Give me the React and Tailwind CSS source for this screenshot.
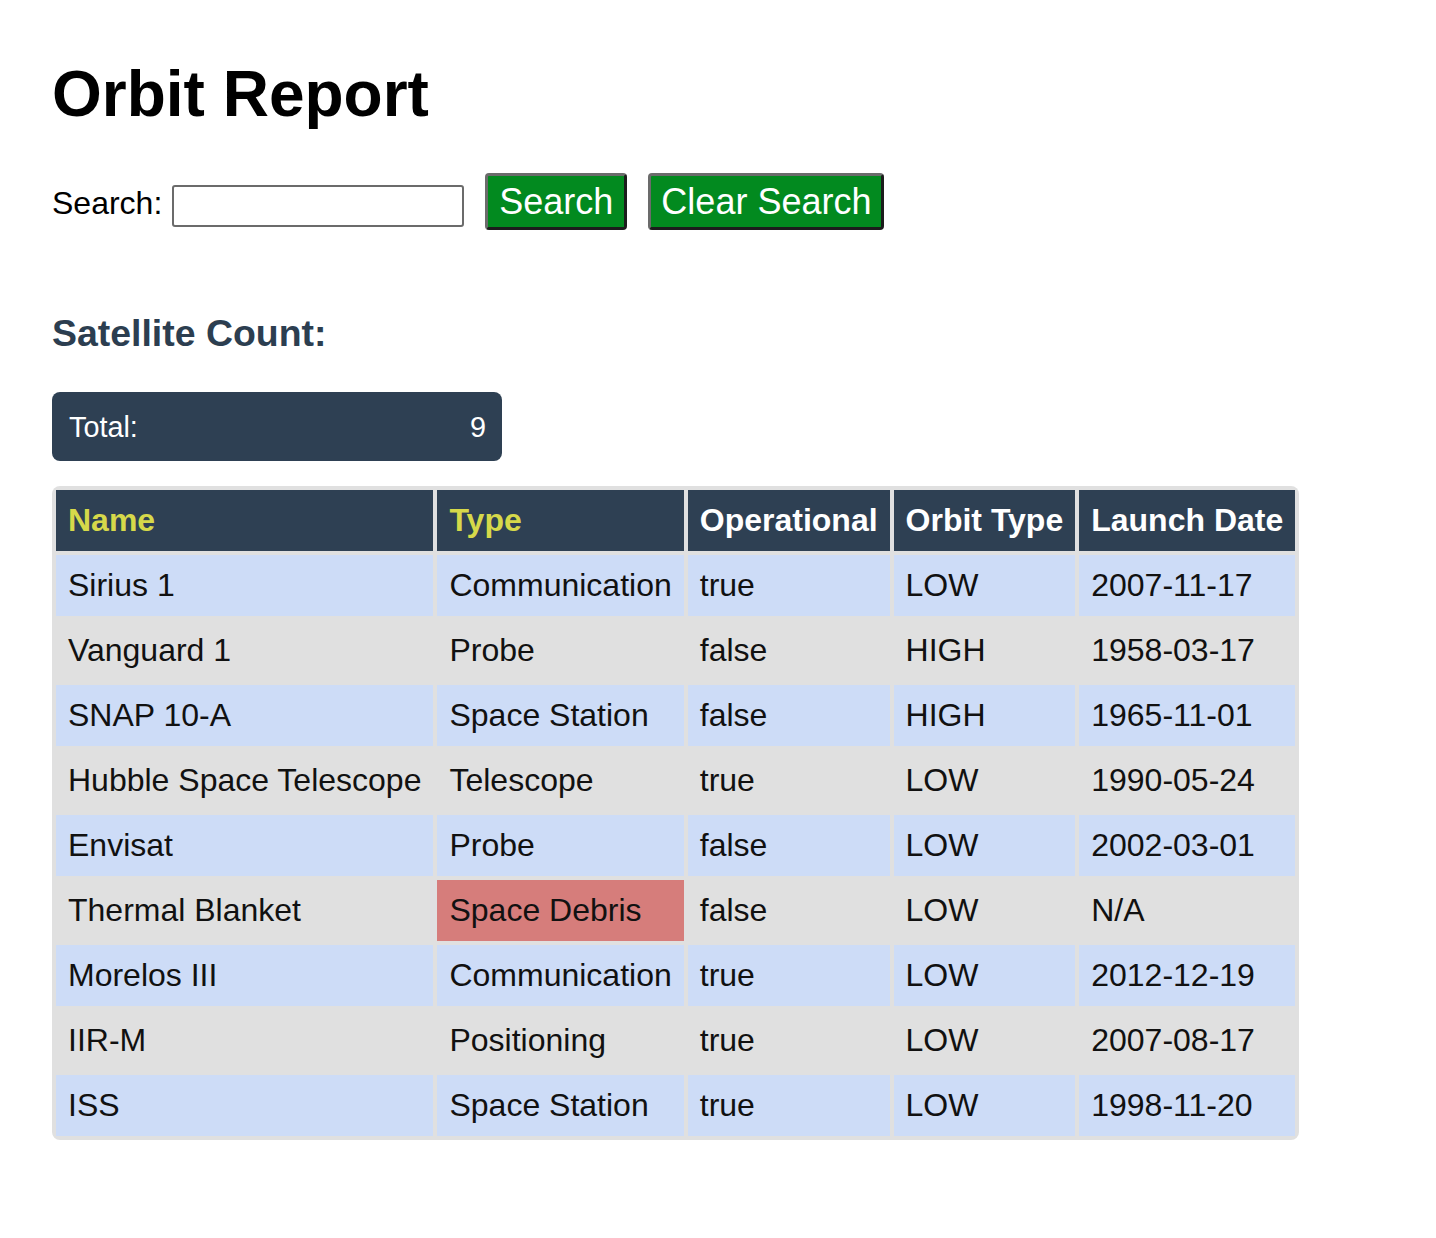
import React from "react";

const rows = [
  ["Sirius 1", "Communication", "true", "LOW", "2007-11-17"],
  ["Vanguard 1", "Probe", "false", "HIGH", "1958-03-17"],
  ["SNAP 10-A", "Space Station", "false", "HIGH", "1965-11-01"],
  ["Hubble Space Telescope", "Telescope", "true", "LOW", "1990-05-24"],
  ["Envisat", "Probe", "false", "LOW", "2002-03-01"],
  ["Thermal Blanket", "Space Debris", "false", "LOW", "N/A"],
  ["Morelos III", "Communication", "true", "LOW", "2012-12-19"],
  ["IIR-M", "Positioning", "true", "LOW", "2007-08-17"],
  ["ISS", "Space Station", "true", "LOW", "1998-11-20"],
];

export default function App() {
  return (
    <div className="min-h-[1238px] bg-white pl-[52px] pt-[57px] font-['Liberation_Sans','Helvetica',Arial,sans-serif] text-[32px] text-black">
      <h1 className="text-[64px] font-bold leading-[74px]">Orbit Report</h1>

      <div className="mt-[42px] flex h-[57px] items-center">
        <label className="mt-[4px] leading-[37px]">Search:</label>
        <input
          type="text"
          className="ml-[10px] mt-[8px] h-[42px] w-[292px] rounded-[3px] border-2 border-[#6b6b6b] bg-white outline-none"
        />
        <button className="ml-[21px] h-[57px] rounded-[4px] border-[3px] border-t-[#6b6b6b] border-l-[#6b6b6b] border-b-[#1c1c1c] border-r-[#1c1c1c] bg-[#028a1f] px-[11px] text-[36px] leading-[41px] text-white">
          Search
        </button>
        <button className="ml-[21px] h-[57px] rounded-[4px] border-[3px] border-t-[#6b6b6b] border-l-[#6b6b6b] border-b-[#1c1c1c] border-r-[#1c1c1c] bg-[#028a1f] px-[10px] text-[36px] leading-[41px] text-white">
          Clear Search
        </button>
      </div>

      <h3 className="mt-[82px] text-[37.44px] font-bold leading-[43px] text-[#2c3e50]">
        Satellite Count:
      </h3>

      <div className="mt-[37px] flex h-[69px] w-[450px] items-center justify-between rounded-[8px] bg-[#2e4053] pl-[17px] pr-[16px] text-[28.8px] text-white">
        <span className="mt-[2px]">Total:</span>
        <span className="mt-[2px]">9</span>
      </div>

      <table className="mt-[25px] border-separate border-spacing-[4px] rounded-[8px] bg-[#e0e0e0]">
        <thead>
          <tr>
            {["Name", "Type", "Operational", "Orbit Type", "Launch Date"].map((h, i) => (
              <th
                key={h}
                className={`bg-[#2e4053] px-[12px] py-[12px] text-left font-bold leading-[37px] ${
                  i < 2 ? "text-[#d6d94a]" : "text-white"
                }`}
              >
                {h}
              </th>
            ))}
          </tr>
        </thead>
        <tbody>
          {rows.map((r, ri) => (
            <tr key={ri}>
              {r.map((c, ci) => {
                const debris = c === "Space Debris";
                const bg = debris ? "bg-[#d67d7b]" : ri % 2 === 0 ? "bg-[#cddcf7]" : "bg-[#e0e0e0]";
                return (
                  <td key={ci} className={`${bg} px-[12px] py-[12px] leading-[37px] text-[#111]`}>
                    {c}
                  </td>
                );
              })}
            </tr>
          ))}
        </tbody>
      </table>
    </div>
  );
}
